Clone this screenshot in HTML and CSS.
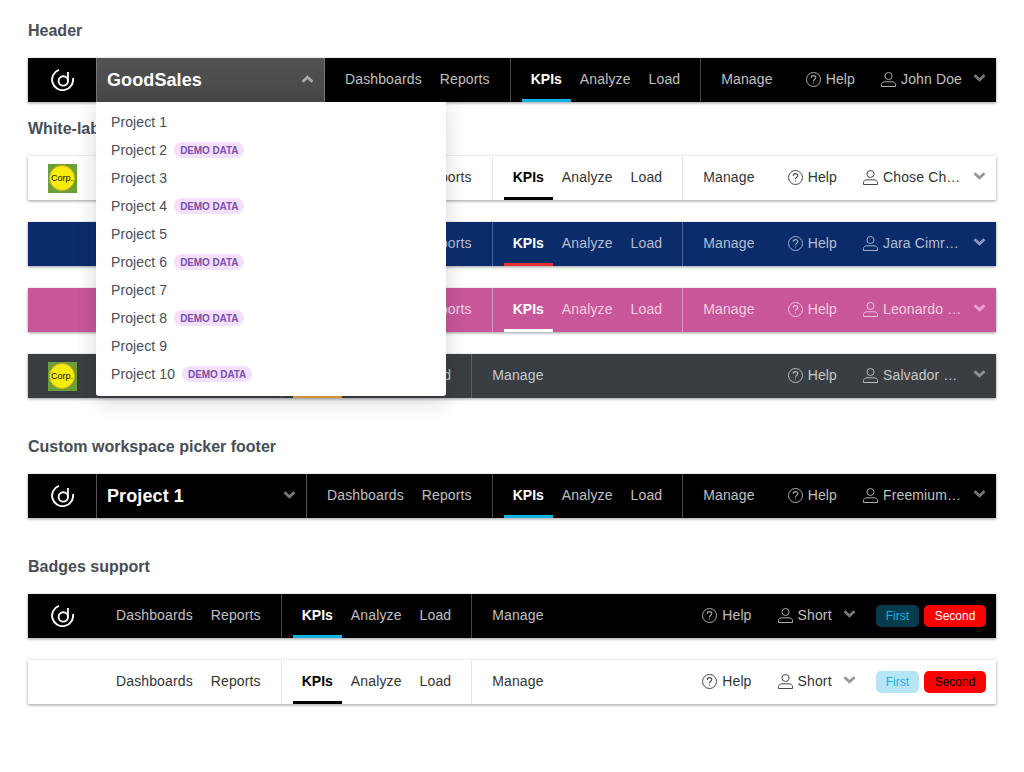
FILE: index.html
```html
<!doctype html>
<html>
<head>
  <title>Header</title>
  <link rel="stylesheet" href="styles.css">
</head>
<body>
  <svg class="sprite" width="0" height="0">
    <symbol id="logo" viewBox="0 0 24 24">
      <path d="M9 1.8A10.5 10.5 0 1 0 23 10" fill="none" stroke="currentColor" stroke-width="1.9"/>
      <circle cx="13.3" cy="12.9" r="4.7" fill="none" stroke="currentColor" stroke-width="1.9"/>
      <path d="M17.9 4V12.9" fill="none" stroke="currentColor" stroke-width="1.9"/>
    </symbol>
    <symbol id="help" viewBox="0 0 15 15">
      <circle cx="7.5" cy="7.5" r="7" fill="none" stroke="currentColor"/>
      <path d="M5.2 5.8C5.2 4.4 6.2 3.6 7.5 3.6S9.8 4.4 9.8 5.6C9.8 7.2 7.5 7.3 7.5 9.2" fill="none" stroke="currentColor" stroke-width="1.1"/>
      <path d="M7 10.4h1v1.2H7z" fill="currentColor"/>
    </symbol>
    <symbol id="user" viewBox="0 0 15 15">
      <ellipse cx="7.5" cy="4" rx="3.6" ry="3.5" fill="none" stroke="currentColor"/>
      <path d="M.5 14.5V12.6C.5 10.6 2.5 9.8 4 9.8H11C12.5 9.8 14.5 10.6 14.5 12.6V14.5Z" fill="none" stroke="currentColor"/>
    </symbol>
    <symbol id="chevron" viewBox="0 0 13 8">
      <path d="M1.5 1.2L6.5 5.8L11.5 1.2" fill="none" stroke="currentColor" stroke-width="2.8"/>
    </symbol>
  </svg>

  <section class="section section-first">
    <h2 class="title">Header</h2>
    <div class="bar bar-black">
      <div class="logo"><svg class="logo-mark"><use href="#logo"/></svg></div>
      <div class="picker picker-open">
        <span class="picker-name">GoodSales</span>
        <svg class="chevron chevron-up"><use href="#chevron"/></svg>
        <ul class="dropdown">
          <li class="project">Project 1</li>
          <li class="project">Project 2 <span class="demo">Demo data</span></li>
          <li class="project">Project 3</li>
          <li class="project">Project 4 <span class="demo">Demo data</span></li>
          <li class="project">Project 5</li>
          <li class="project">Project 6 <span class="demo">Demo data</span></li>
          <li class="project">Project 7</li>
          <li class="project">Project 8 <span class="demo">Demo data</span></li>
          <li class="project">Project 9</li>
          <li class="project">Project 10 <span class="demo">Demo data</span></li>
        </ul>
      </div>
      <nav class="group"><a class="item">Dashboards</a><a class="item">Reports</a></nav>
      <nav class="group group-line"><a class="item item-active">KPIs</a><a class="item">Analyze</a><a class="item">Load</a></nav>
      <nav class="group group-line"><a class="item">Manage</a></nav>
      <div class="right">
        <a class="help"><svg class="icon"><use href="#help"/></svg>Help</a>
        <a class="account"><svg class="icon"><use href="#user"/></svg><span class="name">John Doe</span><svg class="chevron"><use href="#chevron"/></svg></a>
      </div>
    </div>
  </section>

  <section class="section">
    <h2 class="title">White-labeled header</h2>
    <div class="bar bar-white">
      <div class="logo"><div class="corp"><span class="corp-circle">Corp.</span></div></div>
      <div class="picker"></div>
      <nav class="group"><a class="item">Dashboards</a><a class="item">Reports</a></nav>
      <nav class="group group-line"><a class="item item-active">KPIs</a><a class="item">Analyze</a><a class="item">Load</a></nav>
      <nav class="group group-line"><a class="item">Manage</a></nav>
      <div class="right">
        <a class="help"><svg class="icon"><use href="#help"/></svg>Help</a>
        <a class="account"><svg class="icon"><use href="#user"/></svg><span class="name">Chose Chaser</span><svg class="chevron"><use href="#chevron"/></svg></a>
      </div>
    </div>
    <div class="bar bar-blue">
      <div class="logo"></div>
      <div class="picker"></div>
      <nav class="group"><a class="item">Dashboards</a><a class="item">Reports</a></nav>
      <nav class="group group-line"><a class="item item-active">KPIs</a><a class="item">Analyze</a><a class="item">Load</a></nav>
      <nav class="group group-line"><a class="item">Manage</a></nav>
      <div class="right">
        <a class="help"><svg class="icon"><use href="#help"/></svg>Help</a>
        <a class="account"><svg class="icon"><use href="#user"/></svg><span class="name">Jara Cimrman</span><svg class="chevron"><use href="#chevron"/></svg></a>
      </div>
    </div>
    <div class="bar bar-pink">
      <div class="logo"></div>
      <div class="picker"></div>
      <nav class="group"><a class="item">Dashboards</a><a class="item">Reports</a></nav>
      <nav class="group group-line"><a class="item item-active">KPIs</a><a class="item">Analyze</a><a class="item">Load</a></nav>
      <nav class="group group-line"><a class="item">Manage</a></nav>
      <div class="right">
        <a class="help"><svg class="icon"><use href="#help"/></svg>Help</a>
        <a class="account"><svg class="icon"><use href="#user"/></svg><span class="name">Leonardo Da Vinci</span><svg class="chevron"><use href="#chevron"/></svg></a>
      </div>
    </div>
    <div class="bar bar-dark">
      <div class="logo"><div class="corp"><span class="corp-circle">Corp.</span></div></div>
      <nav class="group"><a class="item">Dashboards</a><a class="item">Reports</a></nav>
      <nav class="group group-line"><a class="item item-active">KPIs</a><a class="item">Analyze</a><a class="item">Load</a></nav>
      <nav class="group group-line"><a class="item">Manage</a></nav>
      <div class="right">
        <a class="help"><svg class="icon"><use href="#help"/></svg>Help</a>
        <a class="account"><svg class="icon"><use href="#user"/></svg><span class="name">Salvador Dali</span><svg class="chevron"><use href="#chevron"/></svg></a>
      </div>
    </div>
  </section>

  <section class="section">
    <h2 class="title">Custom workspace picker footer</h2>
    <div class="bar bar-black">
      <div class="logo"><svg class="logo-mark"><use href="#logo"/></svg></div>
      <div class="picker">
        <span class="picker-name">Project 1</span>
        <svg class="chevron"><use href="#chevron"/></svg>
      </div>
      <nav class="group"><a class="item">Dashboards</a><a class="item">Reports</a></nav>
      <nav class="group group-line"><a class="item item-active">KPIs</a><a class="item">Analyze</a><a class="item">Load</a></nav>
      <nav class="group group-line"><a class="item">Manage</a></nav>
      <div class="right">
        <a class="help"><svg class="icon"><use href="#help"/></svg>Help</a>
        <a class="account"><svg class="icon"><use href="#user"/></svg><span class="name">Freemium User</span><svg class="chevron"><use href="#chevron"/></svg></a>
      </div>
    </div>
  </section>

  <section class="section">
    <h2 class="title">Badges support</h2>
    <div class="bar bar-black">
      <div class="logo"><svg class="logo-mark"><use href="#logo"/></svg></div>
      <nav class="group"><a class="item">Dashboards</a><a class="item">Reports</a></nav>
      <nav class="group group-line"><a class="item item-active">KPIs</a><a class="item">Analyze</a><a class="item">Load</a></nav>
      <nav class="group group-line"><a class="item">Manage</a></nav>
      <div class="right">
        <a class="help"><svg class="icon"><use href="#help"/></svg>Help</a>
        <a class="account"><svg class="icon"><use href="#user"/></svg><span class="name">Short</span><svg class="chevron"><use href="#chevron"/></svg></a>
        <div class="badges"><span class="badge badge-first">First</span><span class="badge badge-second">Second</span></div>
      </div>
    </div>
    <div class="bar bar-white">
      <div class="logo"></div>
      <nav class="group"><a class="item">Dashboards</a><a class="item">Reports</a></nav>
      <nav class="group group-line"><a class="item item-active">KPIs</a><a class="item">Analyze</a><a class="item">Load</a></nav>
      <nav class="group group-line"><a class="item">Manage</a></nav>
      <div class="right">
        <a class="help"><svg class="icon"><use href="#help"/></svg>Help</a>
        <a class="account"><svg class="icon"><use href="#user"/></svg><span class="name">Short</span><svg class="chevron"><use href="#chevron"/></svg></a>
        <div class="badges"><span class="badge badge-first">First</span><span class="badge badge-second">Second</span></div>
      </div>
    </div>
  </section>
</body>
</html>
```

FILE: styles.css
```css
* { box-sizing: border-box; }
body { margin: 0; padding: 20px 28px 0; background: #fff; font-family: "Liberation Sans", Arial, sans-serif; color: #464e56; }
.sprite { display: block; }

.section { margin-bottom: 38px; }
.section-first { margin-bottom: 16px; }
.title { margin: 0 0 16px; font-size: 16px; line-height: 22px; font-weight: bold; color: #464e56; }

.bar { display: flex; align-items: stretch; height: 44px; font-size: 14px; letter-spacing: .13px; box-shadow: 0 1px 3px rgba(0, 0, 0, .4); color: var(--text); background: var(--bg); }
.bar + .bar { margin-top: 22px; }
.bar-black { --bg: #000; --text: #c0c0c0; --strong: #fff; --line: #444; --accent: #14b2e2; --chev: #777; }
.bar-white { --bg: #fff; --text: #333; --strong: #000; --line: #e6e6e6; --accent: #000; --chev: #999; }
.bar-blue { --bg: #0b2c6b; --text: #b4bed2; --strong: #fff; --line: #4a6493; --accent: #e5312f; --chev: #8b9ab8; }
.bar-pink { --bg: #c85698; --text: #f0cfe2; --strong: #fff; --line: #dc95bd; --accent: #fff; --chev: #e3a6cc; }
.bar-dark { --bg: #393e42; --text: #c6c8ca; --strong: #fff; --line: #5c6065; --accent: #e8a33d; --chev: #8d9094; }

.logo { flex: 0 0 68px; display: flex; align-items: center; justify-content: center; color: #fff; }
.logo-mark { width: 24px; height: 24px; }
.corp { width: 29px; height: 29px; background: #6a9f3a; display: flex; align-items: center; justify-content: center; }
.corp-circle { width: 26px; height: 26px; border-radius: 50%; background: #f7ec0a; border: 1px solid #e0a92a; color: #111; font-size: 9px; letter-spacing: 0; line-height: 24px; text-align: center; }

.picker { position: relative; flex: 0 0 211px; display: flex; align-items: center; justify-content: space-between; padding: 0 10px; border-left: 1px solid #555; border-right: 1px solid #555; font-size: 18px; font-weight: bold; color: #fff; }
.picker-open { flex-basis: 229px; background: linear-gradient(#525252, #484848); border-color: #777; }
.picker-name { letter-spacing: .1px; }
.picker .chevron { margin-right: 0; color: #777; }
.picker .chevron-up { transform: rotate(180deg); color: #aaa; }

.dropdown { position: absolute; z-index: 5; top: 100%; left: -1px; width: 350px; margin: 0; padding: 6px 0 8px; list-style: none; background: #fff; border-radius: 0 0 3px 3px; box-shadow: 0 5px 20px rgba(20, 23, 40, .18); font-size: 14px; font-weight: normal; letter-spacing: .1px; color: #464e56; }
.project { display: flex; align-items: center; gap: 7px; height: 28px; padding: 0 15px; }
.demo { height: 16px; padding: 0 6px; border-radius: 8px; background: #f2e0fd; color: #7e4fab; font-size: 10px; font-weight: bold; line-height: 17px; letter-spacing: -.1px; text-transform: uppercase; }

.group { display: flex; padding: 0 11px; }
.group-line { border-left: 1px solid var(--line); }
.item { display: flex; align-items: center; padding: 0 9px 2px; }
.item-active { font-weight: bold; color: var(--strong); letter-spacing: 0; box-shadow: inset 0 -3px 0 var(--accent); }

.right { margin-left: auto; display: flex; align-items: center; gap: 26px; padding-right: 10px; }
.help, .account { display: flex; align-items: center; gap: 5px; padding-bottom: 2px; }
.icon { width: 15px; height: 15px; opacity: .9; }
.name { max-width: 79px; overflow: hidden; white-space: nowrap; text-overflow: ellipsis; }
.chevron { width: 13px; height: 8px; margin-left: 6px; margin-top: -2px; color: var(--chev); }

.badges { display: flex; gap: 5px; margin-left: -6px; }
.badge { height: 22px; padding: 0 10px; border-radius: 5px; font-size: 12px; letter-spacing: 0; line-height: 22px; text-align: center; }
.badge-first { color: #14b2e2; }
.badge-second { min-width: 62px; background: #f00; }
.bar-black .badge-first { background: #063a4c; }
.bar-black .badge-second { color: #fff; }
.bar-white .badge-first { background: #b6e5f6; }
.bar-white .badge-second { color: #000; }
```
